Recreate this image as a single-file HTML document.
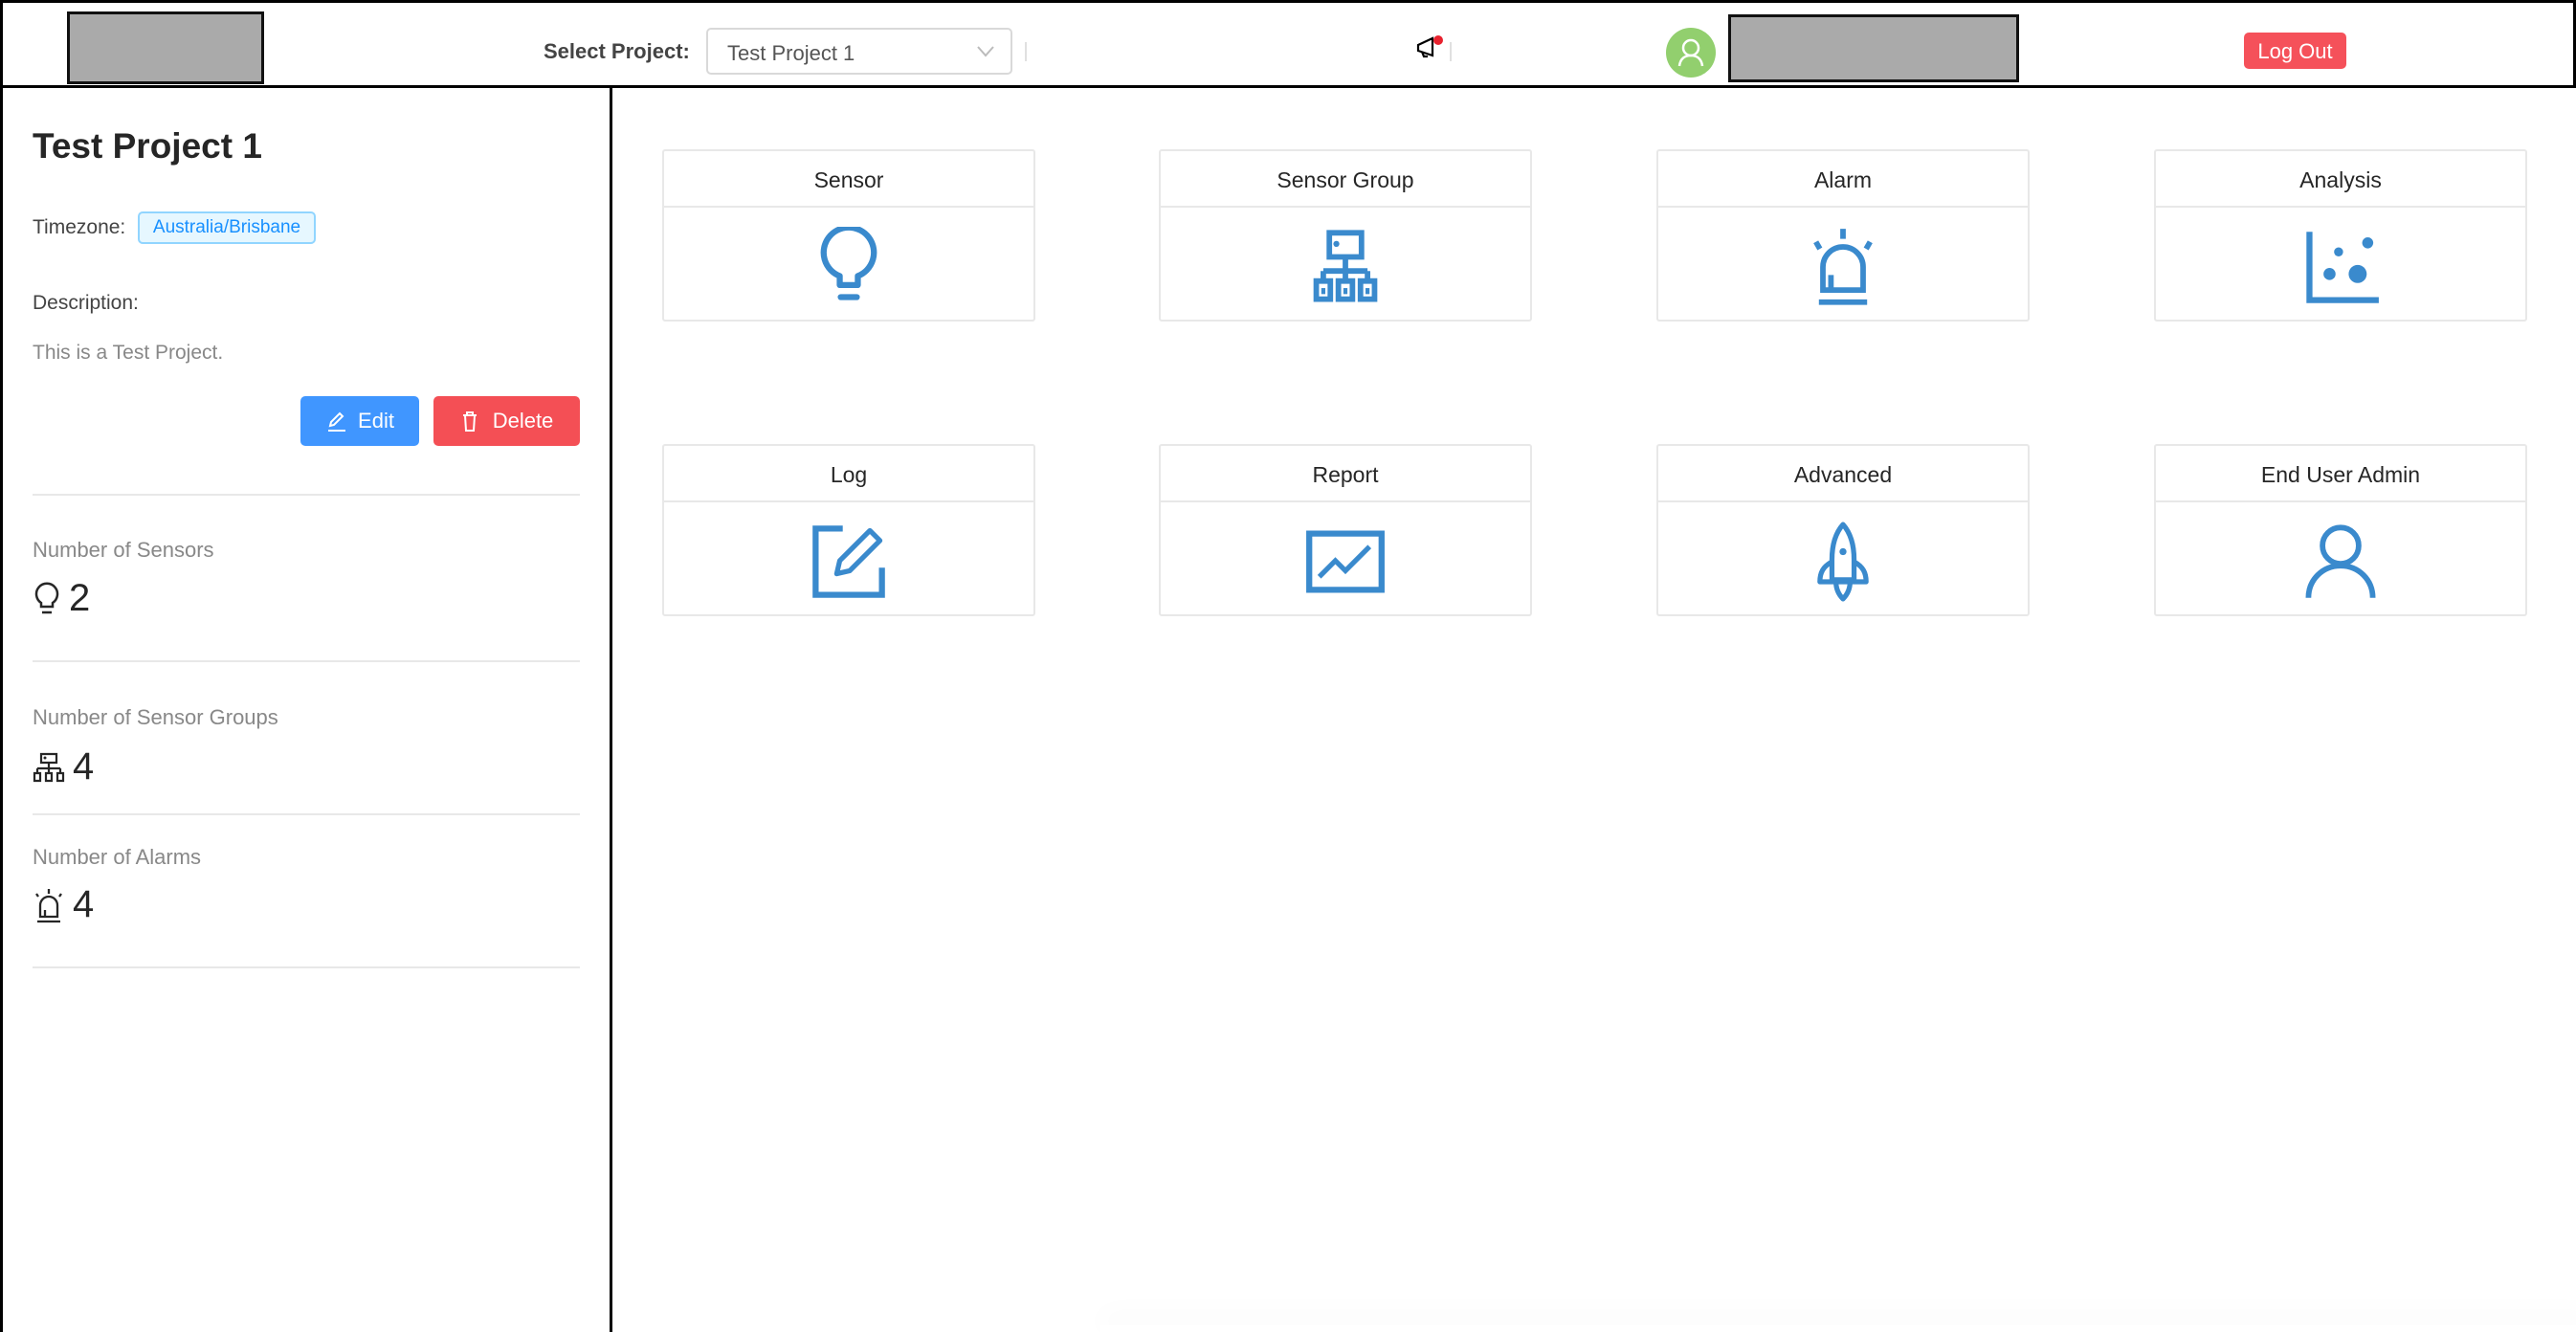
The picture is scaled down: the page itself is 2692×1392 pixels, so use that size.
<!DOCTYPE html>
<html><head><meta charset="utf-8"><style>
*{box-sizing:border-box;margin:0;padding:0}
html,body{width:2692px;height:1392px;overflow:hidden}
body{background:#fff;font-family:"Liberation Sans",sans-serif;position:relative;color:#262626}
.abs{position:absolute}
.hdr{left:0;top:0;width:2692px;height:92px;border:3px solid #000;background:#fff}
.gbox{background:#aaa;border:3px solid #111}
.card{position:absolute;width:390px;height:180px;border:2px solid #e8e8e8;border-radius:3px;background:#fff}
.card .t{height:59px;border-bottom:2px solid #e8e8e8;text-align:center;line-height:60px;font-size:23px;color:#262626}
.card .b{height:117px;display:flex;align-items:center;justify-content:center;padding-top:6px}
.lbl{font-size:22px;color:#888;left:34px}
.num{left:34px;font-size:40px;color:#262626;display:flex;align-items:center;gap:8px}
.hr{left:34px;width:572px;height:2px;background:#e8e8e8}
</style></head><body>
<div class="abs hdr"></div>
<div class="abs gbox" style="left:70px;top:12px;width:206px;height:76px"></div>
<div class="abs" style="left:568px;top:41px;font-size:22px;font-weight:bold;color:#444">Select Project:</div>
<div class="abs" style="left:738px;top:29px;width:320px;height:49px;border:2px solid #d9d9d9;border-radius:5px;font-size:22px;color:#555;padding:12px 0 0 20px">Test Project 1
<svg class="abs" style="right:16px;top:14px" width="20" height="16" viewBox="0 0 20 16"><path d="M2 4l8 9 8-9" fill="none" stroke="#bbb" stroke-width="2"/></svg></div>
<div class="abs" style="left:1071px;top:44px;width:2px;height:20px;background:#e0e0e0"></div>
<svg class="abs" style="left:1478px;top:36px" width="32" height="30" viewBox="0 0 32 30"><path d="M4 11l15-7v18L4 17z M8 18l2 5h4" fill="none" stroke="#000" stroke-width="2.2"/><circle cx="25" cy="6" r="5" fill="#e8222e"/></svg>
<div class="abs" style="left:1515px;top:44px;width:2px;height:20px;background:#e0e0e0"></div>
<div class="abs" style="left:1741px;top:29px;width:52px;height:52px;border-radius:50%;background:#92cf6e"></div>
<svg class="abs" style="left:1741px;top:29px" width="52" height="52" viewBox="0 0 52 52"><circle cx="26" cy="21" r="8" fill="none" stroke="#fff" stroke-width="2.5"/><path d="M14 40c1-8 6-11 12-11s11 3 12 11" fill="none" stroke="#fff" stroke-width="2.5"/></svg>
<div class="abs gbox" style="left:1806px;top:15px;width:304px;height:71px"></div>
<div class="abs" style="left:2345px;top:34px;width:107px;height:38px;background:#f5515a;border-radius:5px;color:#fff;font-size:22px;text-align:center;line-height:39px">Log Out</div>

<div class="abs" style="left:0;top:90px;width:640px;height:1302px;border-left:3px solid #000;border-right:3px solid #000"></div>
<div class="abs" style="left:34px;top:132px;font-size:37px;font-weight:bold;color:#262626">Test Project 1</div>
<div class="abs" style="left:34px;top:226px;font-size:21px;color:#444">Timezone:</div>
<div class="abs" style="left:144px;top:221px;width:186px;height:34px;background:#e6f7ff;border:2px solid #91d5ff;border-radius:5px;font-size:19px;color:#1890ff;text-align:center;line-height:30px">Australia/Brisbane</div>
<div class="abs" style="left:34px;top:305px;font-size:21px;color:#444">Description:</div>
<div class="abs" style="left:34px;top:357px;font-size:21px;color:#888">This is a Test Project.</div>
<div class="abs" style="left:314px;top:414px;width:124px;height:52px;background:#4096ff;border-radius:5px;color:#fff;font-size:22px;display:flex;align-items:center;justify-content:center;gap:10px"><svg width="24" height="24" viewBox="0 0 24 24"><path d="M5 17l1-4 9-9 3 3-9 9z M3 22h18" fill="none" stroke="#fff" stroke-width="2"/></svg>Edit</div>
<div class="abs" style="left:453px;top:414px;width:153px;height:52px;background:#f44f55;border-radius:5px;color:#fff;font-size:22px;display:flex;align-items:center;justify-content:center;gap:14px"><svg width="20" height="24" viewBox="0 0 20 24"><path d="M3 6h14 M7 6V3h6v3 M5 6l1 16h8l1-16" fill="none" stroke="#fff" stroke-width="2"/></svg>Delete</div>
<div class="abs hr" style="top:516px"></div>
<div class="abs lbl" style="top:562px">Number of Sensors</div>
<div class="abs num" style="top:603px"><svg width="30" height="38" viewBox="0 0 30 38"><path d="M9 27v-4a11 11 0 1 1 12 0v4z M10 33h10" fill="none" stroke="#262626" stroke-width="2.5"/></svg>2</div>
<div class="abs hr" style="top:690px"></div>
<div class="abs lbl" style="top:737px">Number of Sensor Groups</div>
<div class="abs num" style="top:779px"><svg width="34" height="34" viewBox="0 0 34 34"><path d="M9 3h16v9H9z M17 12v6 M5 18h24 M5 18v5 M17 18v5 M29 18v5 M2 23h6v8H2z M14 23h6v8h-6z M26 23h6v8h-6z" fill="none" stroke="#262626" stroke-width="2.2"/><circle cx="13" cy="7" r="1.5" fill="#262626"/></svg>4</div>
<div class="abs hr" style="top:850px"></div>
<div class="abs lbl" style="top:883px">Number of Alarms</div>
<div class="abs num" style="top:923px"><svg width="34" height="38" viewBox="0 0 34 38"><path d="M8 31V19a9 9 0 0 1 18 0v12z M13 31v-7 M5 36h24 M17 2v5 M4 7l2 3 M30 7l-2 3" fill="none" stroke="#262626" stroke-width="2.3"/></svg>4</div>
<div class="abs hr" style="top:1010px"></div>

<div class="abs" style="left:1150px;top:1385px;width:1560px;height:7px;box-shadow:0 -8px 30px rgba(0,0,0,0.06)"></div>

<div class="card" style="left:692px;top:156px"><div class="t">Sensor</div><div class="b"><svg width="84" height="84" viewBox="0 0 80 80"><path d="M31 58V49a25 25 0 1 1 18 0v9z" fill="none" stroke="#3a8acd" stroke-width="6" stroke-linejoin="round"/><path d="M32 70h16" stroke="#3a8acd" stroke-width="6" stroke-linecap="round"/></svg></div></div>
<div class="card" style="left:1211px;top:156px"><div class="t">Sensor Group</div><div class="b"><svg width="84" height="84" viewBox="0 0 80 80"><path d="M24 6h32v24H24z M40 30v14 M18 44h44 M18 44v10 M40 44v10 M62 44v10 M11 54h14v18H11z M33 54h14v18H33z M55 54h14v18H55z" fill="none" stroke="#3a8acd" stroke-width="5.5"/><circle cx="31" cy="17" r="3" fill="#3a8acd"/><rect x="16" y="61" width="4" height="6" fill="#3a8acd"/><rect x="38" y="61" width="4" height="6" fill="#3a8acd"/><rect x="60" y="61" width="4" height="6" fill="#3a8acd"/></svg></div></div>
<div class="card" style="left:1731px;top:156px"><div class="t">Alarm</div><div class="b"><svg width="84" height="84" viewBox="0 0 80 80"><path d="M20 63V40a20 20 0 0 1 40 0v23z M28 63V48 M16 75h48 M40 2v10 M13 15l4 7 M67 15l-4 7" fill="none" stroke="#3a8acd" stroke-width="5.5"/></svg></div></div>
<div class="card" style="left:2251px;top:156px"><div class="t">Analysis</div><div class="b"><svg width="84" height="84" viewBox="0 0 80 80"><path d="M9 5v68h69" fill="none" stroke="#3a8acd" stroke-width="6"/><circle cx="29" cy="47" r="6" fill="#3a8acd"/><circle cx="38" cy="25" r="4.5" fill="#3a8acd"/><circle cx="57" cy="47" r="9" fill="#3a8acd"/><circle cx="67" cy="16" r="5.5" fill="#3a8acd"/></svg></div></div>

<div class="card" style="left:692px;top:464px"><div class="t">Log</div><div class="b"><svg width="84" height="84" viewBox="0 0 80 80"><path d="M34 7H7v66h66V46" fill="none" stroke="#3a8acd" stroke-width="6"/><path d="M28 52l3-13 30-30 10 10-30 30z" fill="none" stroke="#3a8acd" stroke-width="5" stroke-linejoin="round"/></svg></div></div>
<div class="card" style="left:1211px;top:464px"><div class="t">Report</div><div class="b"><svg width="84" height="84" viewBox="0 0 80 80"><path d="M4 12h72v56H4z" fill="none" stroke="#3a8acd" stroke-width="6"/><path d="M14 55l16-16 10 10 24-24" fill="none" stroke="#3a8acd" stroke-width="5"/></svg></div></div>
<div class="card" style="left:1731px;top:464px"><div class="t">Advanced</div><div class="b"><svg width="84" height="84" viewBox="0 0 80 80"><path d="M40 3c-8 9-11 21-11 35v20h22V38c0-14-3-26-11-35z M29 40c-9 5-12 11-12 20h46c0-9-3-15-12-20 M33 60c0 8 3 13 7 17 4-4 7-9 7-17" fill="none" stroke="#3a8acd" stroke-width="5" stroke-linejoin="round"/><circle cx="40" cy="30" r="3.5" fill="#3a8acd"/></svg></div></div>
<div class="card" style="left:2251px;top:464px"><div class="t">End User Admin</div><div class="b"><svg width="84" height="84" viewBox="0 0 80 80"><circle cx="40" cy="24" r="18" fill="none" stroke="#3a8acd" stroke-width="5.5"/><path d="M8 76c0-18 14-32 32-32s32 14 32 32" fill="none" stroke="#3a8acd" stroke-width="5.5"/></svg></div></div>
</body></html>
